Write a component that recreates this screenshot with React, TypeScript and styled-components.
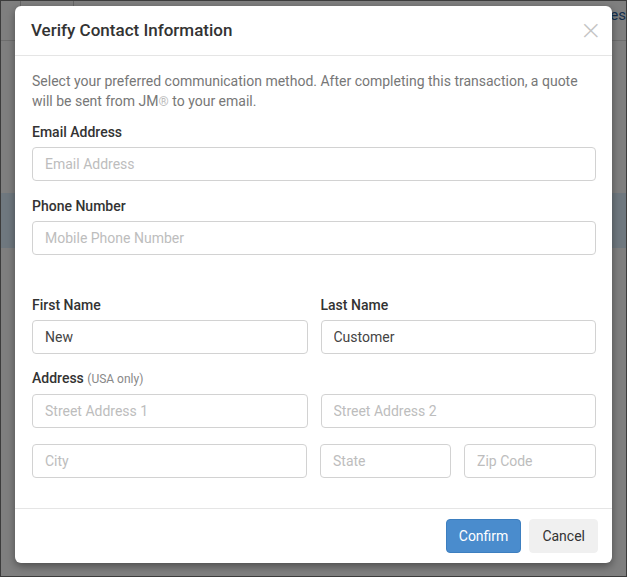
import React from 'react';
import styled, {createGlobalStyle} from 'styled-components';

const GlobalStyle = createGlobalStyle`
  html, body {
    margin: 0;
    padding: 0;
  }
  body {
    font-family: Roboto, "Noto Sans", "Liberation Sans", sans-serif;
    color: #333;
  }
  * {
    box-sizing: border-box;
  }
`;

const Screen = styled.div`
  position: relative;
  width: 627px;
  height: 577px;
  overflow: hidden;
  background: #fff;
  border: 1px solid #3c3c3c;
`;

const PageTop = styled.div`
  display: flex;
  height: 40px;
  border-bottom: 1px solid #ddd;
`;

const PageTab = styled.div`
  width: ${({w}: {w: number}) => w}px;
  border-right: 1px solid #ccc;
`;

const PageLink = styled.div`
  margin-left: auto;
  width: 14px;
  overflow: hidden;
  display: flex;
  justify-content: flex-end;
  padding: 5px 0 0;
  font-size: 15px;
  color: #2a5f9e;
  white-space: nowrap;
`;

const PageBand = styled.div`
  margin-top: 152px;
  height: 55px;
  background: #dcf0ff;
  opacity: 0.9;
`;

const Overlay = styled.div`
  position: absolute;
  inset: 0;
  background: rgba(0, 0, 0, 0.5);
  padding: 5px 14px 13px 14px;
`;

const Modal = styled.div`
  height: 100%;
  background: #fff;
  border-radius: 6px;
  display: flex;
  flex-direction: column;
  box-shadow: 0 3px 9px rgba(0, 0, 0, 0.4);
`;

const Header = styled.div`
  display: flex;
  align-items: center;
  justify-content: space-between;
  height: 50px;
  padding: 0 10px 2px 16px;
  border-bottom: 1px solid #e5e5e5;
`;

const Title = styled.h4`
  margin: 0;
  font-size: 17px;
  font-weight: 500;
  color: #333;
`;

const Close = styled.button`
  border: 0;
  background: none;
  padding: 0;
  color: #c4c4c4;
  font-size: 27px;
  line-height: 1;
  font-family: "DejaVu Sans", sans-serif;
  font-weight: 300;
  cursor: pointer;
`;

const Body = styled.div`
  flex: 1;
  padding: 15px 16px 0 17px;
`;

const Intro = styled.p`
  margin: 0 0 11px;
  font-size: 14px;
  line-height: 20px;
  color: #777;
`;

const Reg = styled.span`
  font-size: 13px;
  color: #bbb;
`;

const Field = styled.div`
  margin-bottom: ${({gap}: {gap?: number}) => gap ?? 16}px;
`;

const Label = styled.label`
  display: block;
  font-size: 14px;
  font-weight: 500;
  color: #333;
  margin-bottom: 6px;
  line-height: 18px;
`;

const Small = styled.span`
  font-size: 12px;
  font-weight: 400;
  color: #888;
`;

const Input = styled.input`
  display: block;
  width: 100%;
  height: 34px;
  padding: 0 12px;
  border: 1px solid #d2d2d2;
  border-radius: 4px;
  font-family: Roboto, "Liberation Sans", sans-serif;
  font-size: 14px;
  color: #444;
  background: #fff;
  outline: none;
  &::placeholder {
    color: #bdbdbd;
  }
`;

const Row = styled.div`
  display: grid;
  grid-template-columns: ${({cols}: {cols: string}) => cols};
  column-gap: 13px;
  margin-bottom: ${({mb}: {mb?: number}) => mb ?? 16}px;
`;

const Footer = styled.div`
  display: flex;
  justify-content: flex-end;
  gap: 8px;
  padding: 10px 14px 10px 0;
  border-top: 1px solid #e5e5e5;
`;

const Button = styled.button`
  height: 34px;
  padding: 0 12px;
  border: 1px solid ${({primary}: {primary?: boolean}) => primary ? '#3d7fc0' : '#f0f0f0'};
  border-radius: 4px;
  background: ${({primary}: {primary?: boolean}) => primary ? '#4a8ccd' : '#f0f0f0'};
  color: ${({primary}: {primary?: boolean}) => primary ? '#fff' : '#333'};
  font-family: Roboto, "Liberation Sans", sans-serif;
  font-size: 14px;
  cursor: pointer;
`;

const App = () => {
    return (
        <Screen>
            <GlobalStyle/>
            <PageTop>
                <PageTab w={20}/>
                <PageTab w={53}/>
                <PageLink><span>Services</span></PageLink>
            </PageTop>
            <PageBand/>
            <Overlay>
                <Modal>
                    <Header>
                        <Title>Verify Contact Information</Title>
                        <Close>×</Close>
                    </Header>
                    <Body>
                        <Intro>
                            Select your preferred communication method. After completing this transaction, a quote
                            will be sent from JM<Reg>®</Reg> to your email.
                        </Intro>
                        <Field>
                            <Label>Email Address</Label>
                            <Input placeholder="Email Address"/>
                        </Field>
                        <Field gap={41}>
                            <Label>Phone Number</Label>
                            <Input placeholder="Mobile Phone Number"/>
                        </Field>
                        <Row cols="1fr 1fr" mb={15}>
                            <div>
                                <Label>First Name</Label>
                                <Input defaultValue="New"/>
                            </div>
                            <div>
                                <Label>Last Name</Label>
                                <Input defaultValue="Customer"/>
                            </div>
                        </Row>
                        <Label>Address <Small>(USA only)</Small></Label>
                        <Row cols="1fr 1fr">
                            <Input placeholder="Street Address 1"/>
                            <Input placeholder="Street Address 2"/>
                        </Row>
                        <Row cols="275px 131px 1fr" mb={0}>
                            <Input placeholder="City"/>
                            <Input placeholder="State"/>
                            <Input placeholder="Zip Code"/>
                        </Row>
                    </Body>
                    <Footer>
                        <Button primary>Confirm</Button>
                        <Button>Cancel</Button>
                    </Footer>
                </Modal>
            </Overlay>
        </Screen>
    )
}

export default App;
